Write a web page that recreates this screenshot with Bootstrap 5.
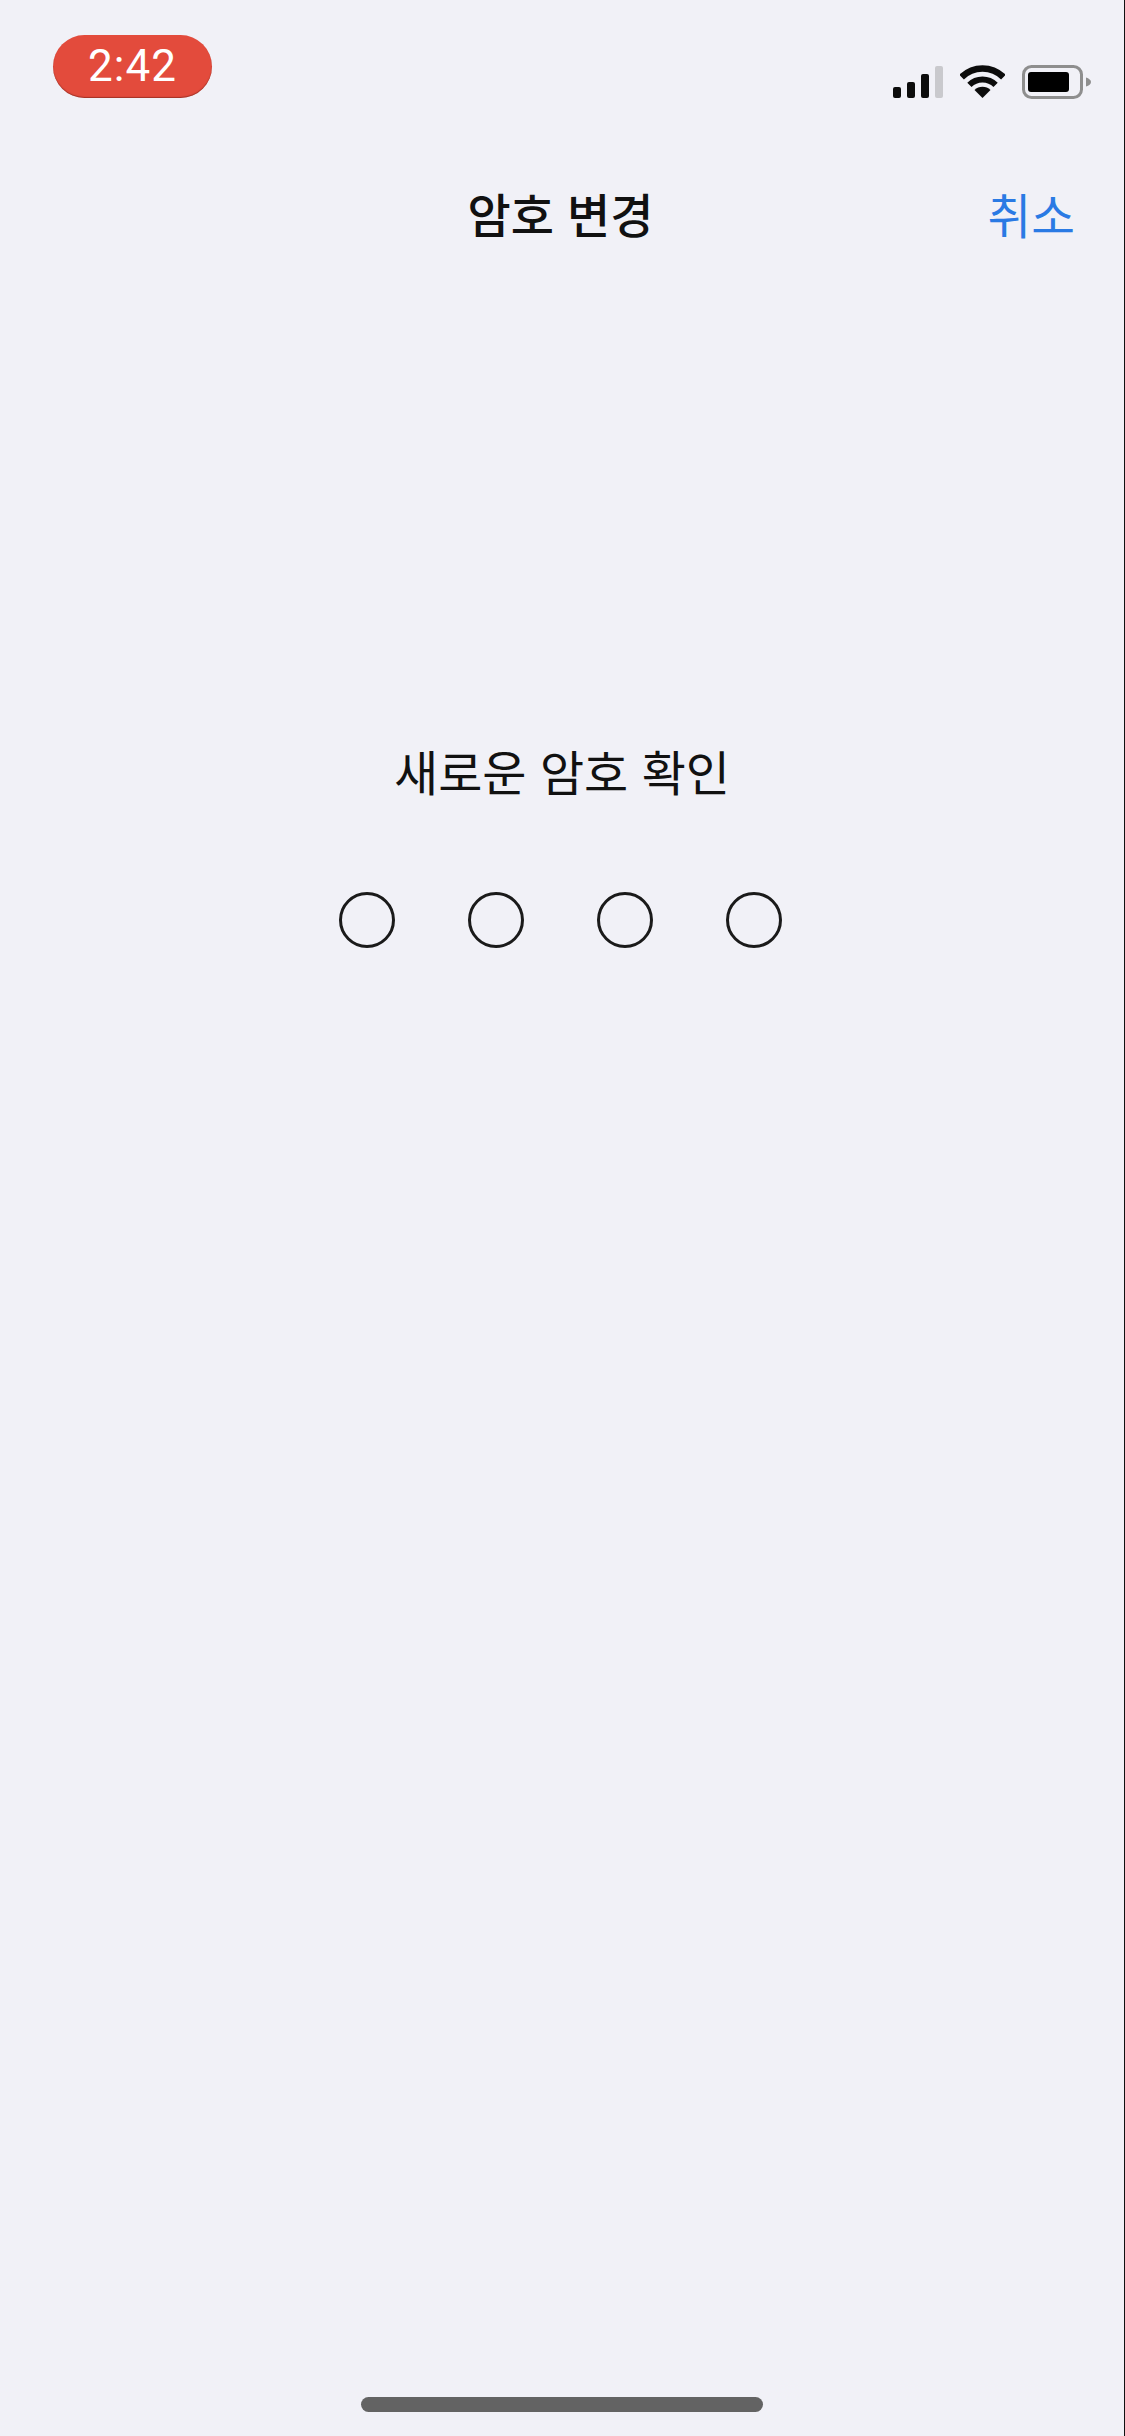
<!DOCTYPE html>
<html lang="ko">
<head>
  <meta charset="UTF-8" />
  <meta name="viewport" content="width=device-width, initial-scale=1.0" />
  <title>암호 변경</title>
  <link href="https://cdn.jsdelivr.net/npm/bootstrap@5.3.0/dist/css/bootstrap.min.css" rel="stylesheet">
  <style>
    body {
      background: #f1f1f7;
      color: #111;
      font-family: "Noto Sans CJK KR", "Liberation Sans", sans-serif;
    }
    .screen {
      height: 2436px;
      border-right: 1px solid #111;
    }
    .status-row {
      height: 130px;
      padding: 35px 33px 0 53px;
    }
    .time-pill {
      width: 159px;
      height: 63px;
      background: #e34b3c;
      border-radius: 32px;
      color: #fff;
      font: 400 44px/62px Roboto, sans-serif;
      letter-spacing: 1px;
      text-align: center;
      box-shadow: inset 0 -1px 1px rgba(110, 30, 20, .55);
    }
    .status-icons {
      padding-top: 30px;
      gap: 17px;
    }
    .signal-bars {
      gap: 6px;
      height: 32px;
      margin-top: 1px;
    }
    .signal-bars span {
      width: 8px;
      background: #0c0c0c;
      border-radius: 2px;
    }
    .signal-bars .bar-1 { height: 11px; }
    .signal-bars .bar-2 { height: 16px; }
    .signal-bars .bar-3 { height: 24px; }
    .signal-bars .bar-4 { height: 32px; background: #c9c9cd; }
    .nav-row {
      display: grid;
      grid-template-columns: 1fr auto 1fr;
      align-items: center;
      padding: 49px 49px 0 46px;
      height: 119px;
    }
    .nav-title {
      font-size: 47px;
      font-weight: 500;
      line-height: 60px;
      margin-top: -2px;
    }
    .nav-cancel {
      color: #2a7ae4;
      font-size: 47.500px;
      line-height: 60px;
      text-decoration: none;
      text-align: right;
    }
    .prompt-text {
      margin-top: 486px;
      font-size: 48px;
      line-height: 70px;
      font-weight: 400;
    }
    .passcode-dots {
      gap: 73px;
      margin-top: 87px;
      margin-right: 3px;
    }
    .passcode-dots span {
      width: 56px;
      height: 56px;
      border: 3px solid #1a1a1a;
      border-radius: 50%;
    }
    .home-bar {
      width: 402px;
      height: 15px;
      margin-bottom: 24px;
      background: #636363;
      border-radius: 8px;
    }
  </style>
</head>
<body>
  <div class="screen d-flex flex-column">
    <div class="status-row d-flex justify-content-between align-items-start">
      <div class="time-pill">2:42</div>
      <div class="status-icons d-flex align-items-start">
        <div class="signal-bars d-flex align-items-end">
          <span class="bar-1"></span>
          <span class="bar-2"></span>
          <span class="bar-3"></span>
          <span class="bar-4"></span>
        </div>
        <svg width="45" height="33" viewBox="0 0 45 33" fill="none">
          <path d="M1.6 12.1A29.5 29.5 0 0 1 43.4 12.1" stroke="#0c0c0c" stroke-width="6.5"/>
          <path d="M9.4 19.9A18.5 18.5 0 0 1 35.6 19.9" stroke="#0c0c0c" stroke-width="6"/>
          <path d="M22.5 33L14.5 25A11.3 11.3 0 0 1 30.5 25Z" fill="#0c0c0c"/>
        </svg>
        <svg width="69" height="34" viewBox="0 0 69 34" fill="none">
          <rect x="1.500" y="1.500" width="58" height="31" rx="8" stroke="#8e8e8e" stroke-width="3"/>
          <rect x="6" y="7" width="41" height="20" rx="3" fill="#000"/>
          <path d="M64 12.500C67 13.500 69 15 69 17S67 20.500 64 21.500Z" fill="#8e8e8e"/>
        </svg>
      </div>
    </div>

    <div class="nav-row">
      <div></div>
      <div class="nav-title">암호 변경</div>
      <a class="nav-cancel" href="#">취소</a>
    </div>

    <div class="d-flex flex-column align-items-center flex-grow-1">
      <div class="prompt-text">새로운 암호 확인</div>
      <div class="passcode-dots d-flex">
        <span></span><span></span><span></span><span></span>
      </div>
      <div class="home-bar mt-auto"></div>
    </div>
  </div>

  <script src="https://cdn.jsdelivr.net/npm/bootstrap@5.3.0/dist/js/bootstrap.bundle.min.js"></script>
</body>
</html>
